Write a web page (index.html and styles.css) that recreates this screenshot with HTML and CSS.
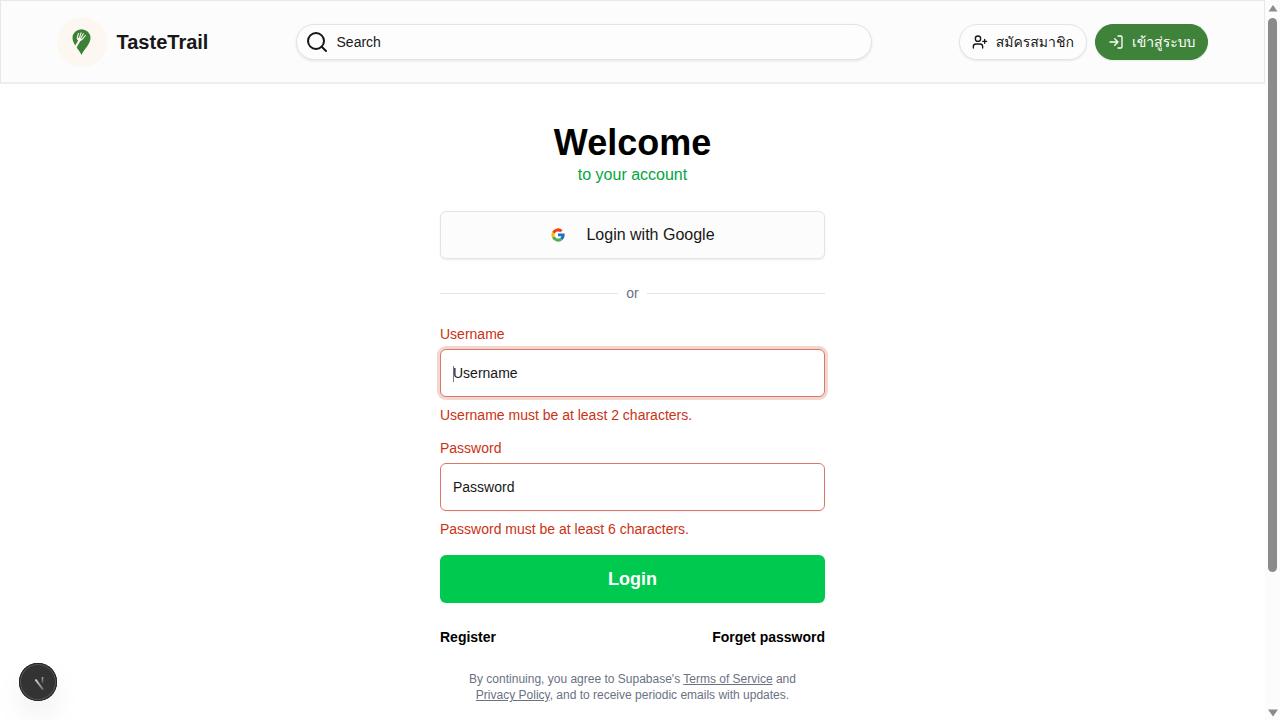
FILE: index.html
```html
<!DOCTYPE html>
<html lang="th">
<head>
<meta charset="utf-8">
<meta name="viewport" content="width=device-width, initial-scale=1">
<title>TasteTrail</title>
<link rel="stylesheet" href="styles.css">
</head>
<body class="shell">
<div class="page">
  <header class="site-header">
    <div class="header-inner">
      <a class="brand" href="#">
        <svg class="brand-logo" viewBox="0 0 50 50" aria-hidden="true">
          <circle cx="25" cy="25" r="25" fill="#fcf7f0"/>
          <path d="M24.500 38C22.500 33 15.500 27 15.500 21a9 8.800 0 0 1 18 0c0 6-7 12-9 17z" fill="#3c8138"/>
          <path d="M18 31l5-8.500" stroke="#fcf7f0" stroke-width="2.200" fill="none"/>
          <path d="M21.500 16.500l-1.200 3.800c-.6 2.700 2.500 4.200 4.600 2.200l3.400-4" stroke="#fcf7f0" stroke-width="1.100" fill="none" stroke-linecap="round"/>
          <path d="M21 20.500l4 1.500-2 2-2.500-1z" fill="#fcf7f0"/>
          <path d="M24 15.800l-1.500 5M26.300 16.800l-2.700 4.700" stroke="#fcf7f0" stroke-width="1.100" fill="none" stroke-linecap="round"/>
        </svg>
        <span class="brand-name">TasteTrail</span>
      </a>
      <button class="search" type="button">
        <svg class="icon-search" viewBox="0 0 24 24" aria-hidden="true"><circle cx="11" cy="11" r="8"/><path d="m21 21-4.300-4.300"/></svg>
        <span>Search</span>
      </button>
      <nav class="actions">
        <a class="pill" href="#">
          <svg class="icon" viewBox="0 0 24 24" aria-hidden="true"><path d="M16 21v-2a4 4 0 0 0-4-4H6a4 4 0 0 0-4 4v2"/><circle cx="9" cy="7" r="4"/><path d="M19 8v6M22 11h-6"/></svg>
          <span>สมัครสมาชิก</span>
        </a>
        <a class="pill pill-primary" href="#">
          <svg class="icon" viewBox="0 0 24 24" aria-hidden="true"><path d="m10 17 5-5-5-5M15 12H3M15 3h4a2 2 0 0 1 2 2v14a2 2 0 0 1-2 2h-4"/></svg>
          <span>เข้าสู่ระบบ</span>
        </a>
      </nav>
    </div>
  </header>

  <main class="main">
    <form class="login">
      <div class="intro">
        <h1 class="title">Welcome</h1>
        <p class="subtitle">to your account</p>
      </div>
      <button class="google" type="button">
        <svg class="icon-google" viewBox="0 0 48 48" aria-hidden="true">
          <path fill="#f4400f" d="M6.300 14.700A20 20 0 0 1 37.800 9.500l-6.500 6.300A11 11 0 0 0 14 20.300z"/>
          <path fill="#fbb90c" d="M6.300 14.700a20 20 0 0 0 0 18.600l7.700-5.600a11 11 0 0 1 0-7.400z"/>
          <path fill="#4caf50" d="M6.300 33.300A20 20 0 0 0 37.400 38.800l-7-6A11 11 0 0 1 14 27.700z"/>
          <path fill="#1e6fc8" d="M43.600 19.500H24v8.500h10.300a11 11 0 0 1-3.900 4.800l7 6C41 35.500 44 30.500 44 24c0-1.300-.1-3-.4-4.500z"/>
        </svg>
        <span>Login with Google</span>
      </button>
      <div class="divider"><span>or</span></div>
      <div class="fields">
        <div class="field">
          <label class="label" for="username">Username</label>
          <div class="control">
            <input class="input input-active" id="username" type="text" placeholder="Username" aria-invalid="true" aria-describedby="username-error">
            <span class="caret"></span>
          </div>
          <p class="error" id="username-error">Username must be at least 2 characters.</p>
        </div>
        <div class="field">
          <label class="label" for="password">Password</label>
          <input class="input" id="password" type="password" placeholder="Password" aria-invalid="true" aria-describedby="password-error">
          <p class="error" id="password-error">Password must be at least 6 characters.</p>
        </div>
        <button class="submit" type="submit">Login</button>
      </div>
      <div class="links">
        <a href="#">Register</a>
        <a href="#">Forget password</a>
      </div>
      <p class="terms">By continuing, you agree to Supabase's <a href="#">Terms of Service</a> and <a href="#">Privacy Policy</a>, and to receive periodic emails with updates.</p>
    </form>
  </main>
</div>
<div class="scrollbar" aria-hidden="true">
  <svg class="arrow" viewBox="0 0 15 18"><path d="M8 5l4.500 6.500h-9z"/></svg>
  <div class="track"><div class="thumb"></div></div>
  <svg class="arrow" viewBox="0 0 15 18"><path d="M3 7.500h10l-5 7z"/></svg>
</div>
<button class="dev-badge" type="button" aria-label="Open developer tools">
  <svg class="dev-icon" viewBox="0 0 38 38" aria-hidden="true">
    <defs>
      <linearGradient id="slash" gradientUnits="userSpaceOnUse" x1="17" y1="16" x2="25" y2="27"><stop stop-color="#ddd"/><stop offset="1" stop-color="#666"/></linearGradient>
      <linearGradient id="stem" gradientUnits="userSpaceOnUse" x1="0" y1="14" x2="0" y2="20"><stop stop-color="#aaa"/><stop offset="1" stop-color="#555"/></linearGradient>
    </defs>
    <path d="M16.500 16.500l7.500 10" stroke="url(#slash)" stroke-width="2"/>
    <path d="M22.700 14h1.600v6h-1.600z" fill="url(#stem)"/>
  </svg>
</button>
</body>
</html>
```

FILE: styles.css
```css
* { box-sizing: border-box; }

.shell {
  display: flex;
  margin: 0;
  background: #fff;
  color: #171717;
  font-family: "Liberation Sans", Arial, Loma, "Noto Sans Thai Looped", Waree, "Noto Sans Thai", sans-serif;
  font-size: 14px;
  line-height: 20px;
}

.shell button, .shell input { font: inherit; }
.shell a { color: inherit; text-decoration: none; }
.shell h1, .shell p { margin: 0; }

.page { flex: 1; min-width: 0; }

.site-header {
  padding: 16px 16px 15px;
  background: #fcfcfc;
  border: 1px solid #e8e8e8;
  border-bottom: 2px solid #eee;
}

.header-inner {
  display: flex;
  align-items: center;
  justify-content: space-between;
  max-width: 1152px;
  margin: 0 auto;
}

.brand { display: flex; align-items: center; gap: 10px; }
.brand-logo { width: 50px; height: 50px; }
.brand-name { font-size: 20px; font-weight: 700; line-height: 28px; }

.search {
  display: flex;
  align-items: center;
  gap: 8px;
  width: 50%;
  height: 36px;
  padding: 0 8px;
  color: #171717;
  background: #fdfdfd;
  border: 1px solid #e4e4e4;
  border-radius: 18px;
  box-shadow: 0 1px 3px rgba(0, 0, 0, 0.1);
}

.icon-search, .icon {
  fill: none;
  stroke: currentColor;
  stroke-width: 2;
  stroke-linecap: round;
  stroke-linejoin: round;
}
.icon-search { width: 24px; height: 24px; }
.icon { width: 16px; height: 16px; }

.actions { display: flex; gap: 8px; }
.pill {
  display: flex;
  align-items: center;
  gap: 8px;
  height: 36px;
  padding: 0 12px;
  white-space: nowrap;
  background: #fdfdfd;
  border: 1px solid #e4e4e4;
  border-radius: 18px;
  box-shadow: 0 1px 2px rgba(0, 0, 0, 0.08);
}
.shell .pill-primary { color: #fff; background: #3f8239; border-color: #3f8239; }

.main { display: flex; justify-content: center; padding: 39px 16px 16px; }
.login { display: flex; flex-direction: column; gap: 24px; width: 100%; max-width: 385px; }
.intro { text-align: center; }
.title { color: #000; font-size: 36px; font-weight: 700; line-height: 40px; }
.subtitle { color: #00a63e; font-size: 16px; line-height: 24px; }

.shell .google {
  display: flex;
  align-items: center;
  justify-content: center;
  gap: 20px;
  height: 48px;
  color: #171717;
  font-size: 16px;
  background: #fcfcfc;
  border: 1px solid #e4e4e4;
  border-radius: 6px;
  box-shadow: 0 1px 2px rgba(0, 0, 0, 0.08);
}
.icon-google { width: 16px; height: 16px; }

.divider { display: flex; align-items: center; gap: 8px; color: #6a7282; }
.divider::before, .divider::after { content: ""; flex: 1; height: 1px; background: #e4e4e4; }

.fields { display: flex; flex-direction: column; gap: 16px; }
.field { display: flex; flex-direction: column; gap: 8px; }
.label { color: #ca3214; line-height: 14px; }
.error { color: #ca3214; }
.control { position: relative; }
.input {
  display: block;
  width: 100%;
  height: 48px;
  padding: 0 12px;
  color: #171717;
  background: #fff;
  border: 1px solid #dc7665;
  border-radius: 6px;
  outline: none;
  box-shadow: 0 1px 2px rgba(0, 0, 0, 0.05);
}
.input::placeholder { color: #171717; opacity: 1; }
.input-active { box-shadow: 0 0 0 3px #f4d6d0; }
.caret { position: absolute; top: 17px; left: 13px; width: 1px; height: 16px; background: #777; }

.shell .submit {
  height: 48px;
  color: #fff;
  font-size: 18px;
  font-weight: 700;
  background: #00c950;
  border: 0;
  border-radius: 6px;
}

.links { display: flex; justify-content: space-between; color: #000; font-weight: 700; }
.terms { padding: 0 8px; color: #6a7282; font-size: 12px; line-height: 16px; text-align: center; text-wrap: balance; }
.shell .terms a { text-decoration: underline; }

.scrollbar {
  position: sticky;
  top: 0;
  display: flex;
  flex-direction: column;
  width: 15px;
  height: 100vh;
  background: #fcfcfc;
}
.arrow { width: 15px; height: 18px; fill: #8b8b8b; }
.track { flex: 1; padding: 0 3px; }
.thumb { height: 81%; background: #8b8b8b; border-radius: 5px; }

.dev-badge {
  position: fixed;
  bottom: 19px;
  left: 19px;
  width: 38px;
  height: 38px;
  padding: 0;
  background: #333;
  border: 0;
  border-radius: 50%;
  box-shadow: inset 0 0 0 1px #222, inset 0 0 0 2px #555, 0 16px 32px -8px rgba(0, 0, 0, 0.18);
}
.dev-icon { display: block; width: 38px; height: 38px; }
```
